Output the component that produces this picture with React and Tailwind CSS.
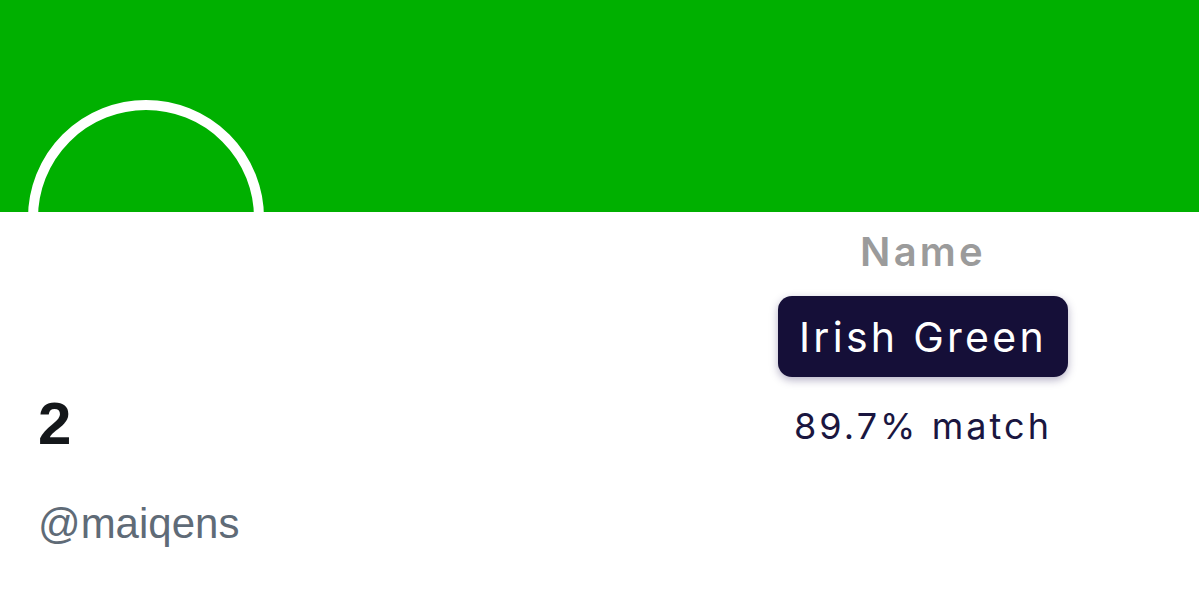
export default function App() {
  return (
    <div className="relative w-[1199px] h-[594px] overflow-hidden bg-white">
      <div className="h-[212px] bg-[#00b000]" />
      <div className="absolute left-[28px] top-[100px] w-[236px] h-[236px] rounded-full border-[10px] border-white" />
      <div className="flex justify-between">
        <div className="pl-[38px] pt-[180px] flex flex-col" style={{ fontFamily: '"Liberation Sans", Arial, sans-serif' }}>
          <div className="text-[60px] leading-[64px] font-bold text-[#14171a]">2</div>
          <div className="mt-[44px] text-[42px] leading-[48px] text-[#5f6b77]">@maiqens</div>
        </div>
        <div className="mr-[131px] pt-[16px] flex flex-col items-center w-[290px]" style={{ fontFamily: 'Inter, "Open Sans", sans-serif' }}>
          <div className="text-[40px] leading-[48px] font-semibold text-[#9b9b9b] tracking-[0.08em]">Name</div>
          <div className="mt-[20px] w-[290px] h-[81px] rounded-[14px] bg-[#150f38] flex items-center justify-center shadow-[0_3px_8px_rgba(40,30,90,0.35)]">
            <span className="text-[41px] leading-[50px] text-white tracking-[0.08em]">Irish Green</span>
          </div>
          <div className="mt-[27px] text-[36px] leading-[44px] text-[#1a1640] tracking-[0.085em]">89.7% match</div>
        </div>
      </div>
    </div>
  );
}
